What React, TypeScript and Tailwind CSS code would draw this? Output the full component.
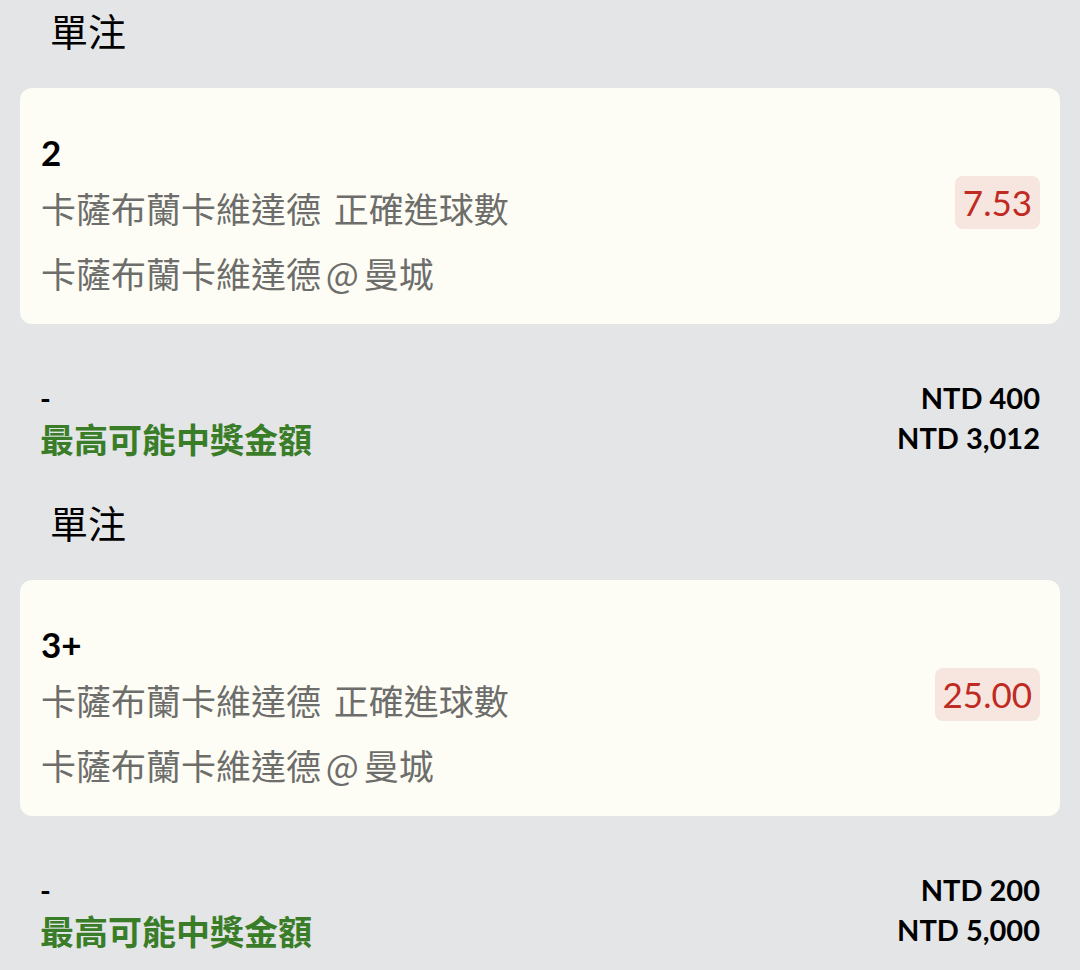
import React from 'react';

type Bet = {
  pick: string;
  market: string;
  match: string;
  odds: string;
  stake: string;
  maxWin: string;
};

const bets: Bet[] = [
  { pick: '2', market: '卡薩布蘭卡維達德 正確進球數', match: '卡薩布蘭卡維達德 @ 曼城', odds: '7.53', stake: 'NTD 400', maxWin: 'NTD 3,012' },
  { pick: '3+', market: '卡薩布蘭卡維達德 正確進球數', match: '卡薩布蘭卡維達德 @ 曼城', odds: '25.00', stake: 'NTD 200', maxWin: 'NTD 5,000' },
];

const font = { fontFamily: 'Lato, "Noto Sans CJK TC", sans-serif' };
const cjk = { fontFamily: '"Noto Sans CJK TC", sans-serif' };

function BetSection({ bet }: { bet: Bet }) {
  return (
    <section>
      {/* Heading */}
      <div className="h-[60px] pl-[50px] text-[38px] leading-[60px] text-black" style={cjk}>單注</div>

      {/* Selection card */}
      <div className="mx-[20px] mt-[28px] flex items-start justify-between rounded-[12px] bg-[#fdfdf5] pl-[21px] pr-[20px] pt-[42px] pb-[20px]">
        <div className="flex flex-col">
          <div className="text-[35px] font-bold leading-[44px] text-black">{bet.pick}</div>
          <div className="text-[35px] leading-[68px] text-[#6d6d6b] [word-spacing:5px]" style={cjk}>{bet.market}</div>
          <div className="text-[35px] leading-[62px] text-[#6d6d6b] [word-spacing:-3px]" style={cjk}>{bet.match}</div>
        </div>
        <div className="mt-[46px] flex h-[53px] items-center rounded-[8px] bg-[#f6e6df] px-[8px] text-[35px] text-[#bf2b22]">
          {bet.odds}
        </div>
      </div>

      {/* Stake + potential win */}
      <div className="mt-[54px] mb-[34px] px-[40px]">
        <div className="flex h-[40px] items-center justify-between">
          <span className="text-[29px] font-bold text-black">-</span>
          <span className="text-[29px] font-bold text-black">{bet.stake}</span>
        </div>
        <div className="flex h-[40px] items-center justify-between">
          <span className="text-[34px] font-bold text-[#3a7d28]" style={cjk}>最高可能中獎金額</span>
          <span className="text-[29px] font-bold text-black">{bet.maxWin}</span>
        </div>
      </div>
    </section>
  );
}

export default function App() {
  return (
    <div className="min-h-screen w-full overflow-hidden bg-[#e4e5e7]" style={font}>
      {bets.map((b, i) => (
        <BetSection key={i} bet={b} />
      ))}
    </div>
  );
}
